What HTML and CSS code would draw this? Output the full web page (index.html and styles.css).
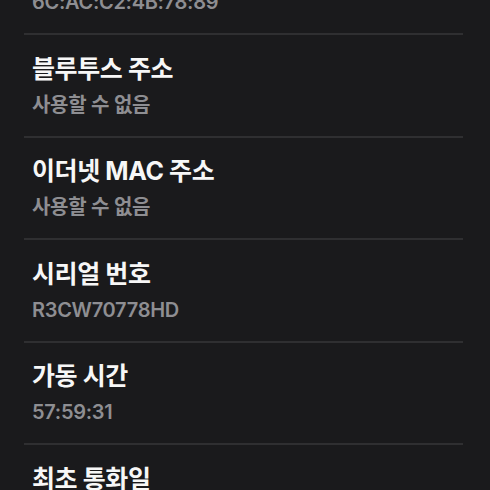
FILE: index.html
```html
<html>

<head>
    <link rel="stylesheet" href="styles.css">
</head>

<body>
    <div id="infoList">
        <div class="infoRow">
            <div class="infoTitle">Wi-Fi MAC 주소</div>
            <div class="infoValue">6C:AC:C2:4B:78:89</div>
        </div>
        <div class="infoRow">
            <div class="infoTitle">블루투스 주소</div>
            <div class="infoValue">사용할 수 없음</div>
        </div>
        <div class="infoRow">
            <div class="infoTitle">이더넷 MAC 주소</div>
            <div class="infoValue">사용할 수 없음</div>
        </div>
        <div class="infoRow">
            <div class="infoTitle">시리얼 번호</div>
            <div class="infoValue">R3CW70778HD</div>
        </div>
        <div class="infoRow">
            <div class="infoTitle">가동 시간</div>
            <div class="infoValue">57:59:31</div>
        </div>
        <div class="infoRow">
            <div class="infoTitle">최초 통화일</div>
            <div class="infoValue">2023-01-01</div>
        </div>
    </div>
</body>

</html>
```

FILE: styles.css
```css
    html,
    body {
        margin: 0;
        height: 490px;
        overflow: hidden;
        background: #1a1a1c;
    }

    body {
        font-family: Inter, "Noto Sans CJK KR", sans-serif;
    }

    #infoList {
        margin-top: -67.5px;
        padding-left: 24px;
        padding-right: 27px;
    }

    .infoRow {
        padding: 18.5px 0 18px 8px;
        border-bottom: 2px solid #2f2f31;
    }

    .infoTitle {
        font-size: 25px;
        line-height: 30px;
        font-weight: 700;
        letter-spacing: -0.4px;
        color: #f7f7f7;
        margin-bottom: 8px;
    }

    .infoValue {
        font-size: 20px;
        line-height: 26px;
        font-weight: 600;
        letter-spacing: -0.3px;
        color: #8e8e92;
    }
```
